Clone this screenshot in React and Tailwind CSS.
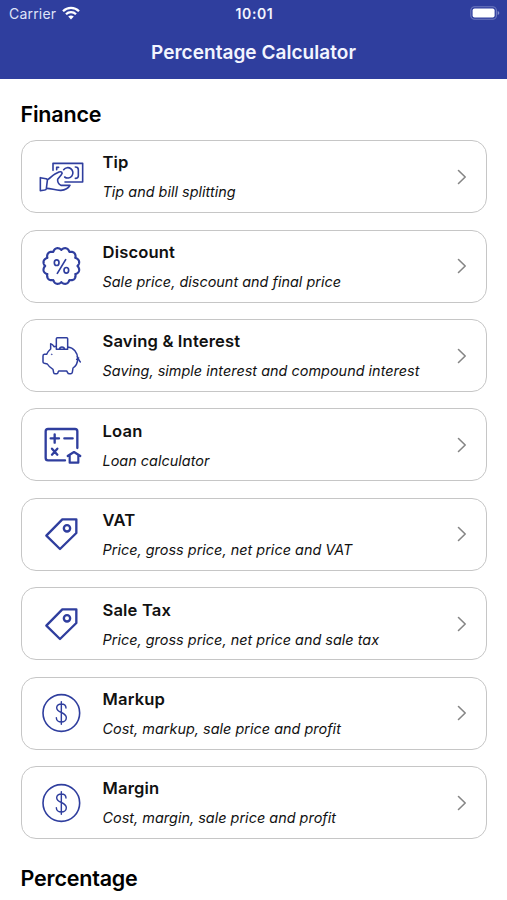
const TipIcon = () => (
  <g strokeWidth="4.8">
    <path d="M48 52V31H137V87H84" />
    <path d="M59 50V43H65M115 42C122 42 124 44 124 50V69C124 74 121 76 115 76" />
    <path d="M80 50A15.5 15.5 0 1 1 83 72" />
    <path d="M10 74L27 77Q32 78 31 83L28 107Q27 110 23 111L10 113Z" />
    <path d="M32 80C42 73 46 67 54 63L66 57C74 54 78 60 73 65L62 79C61 86 65 93 72 97L99 97C96 105 83 111 72 112C57 113 43 106 29 106" />
  </g>
);

const DiscountIcon = () => {
  const points = [];
  for (let i = 0; i < 240; i++) {
    const a = (i * Math.PI) / 120;
    const r = 48.5 + 6.5 * Math.pow(Math.abs(Math.sin(6 * a)), 0.9);
    points.push(`${(73 + r * Math.sin(a)).toFixed(1)},${(72 - r * Math.cos(a)).toFixed(1)}`);
  }
  return (
    <g strokeWidth="6.5">
      <polygon points={points.join(' ')} />
      <g strokeWidth="5">
        <ellipse cx="59" cy="62" rx="7" ry="8.5" />
        <ellipse cx="88" cy="85" rx="7" ry="8.5" />
        <path d="M86 53L61 94" />
      </g>
    </g>
  );
};

const SavingIcon = () => (
  <g strokeWidth="4.5">
    <path d="M58 52V20Q58 17 61 17H89Q92 17 92 20V52ZM67 52Q68 45 75 45T83 52" />
    <path d="M58 43L51 44C48 38 45 36 41 35V51C35 56 31 61 29 67H22Q18 68 18 72V90Q18 93 22 94L31 96C35 103 41 108 48 112L50 122Q51 125 55 125H60Q63 125 63 121L65 117H89L92 122Q93 125 97 125H101Q105 125 106 121L108 108C117 102 122 92 122 80C122 61 110 47 92 45" />
    <path d="M121 73C121 80 124 83 130 90M119 82L125 78" />
    <circle cx="44" cy="67" r="1.5" fill="currentColor" strokeWidth="1" />
  </g>
);

const LoanIcon = () => (
  <g strokeWidth="7">
    <path d="M121 81V31Q121 24 114 24H33Q26 24 26 31V111Q26 118 33 118H84" />
    <path d="M41 52H66M53 40V65M82 52H107M45 83L61 101M61 83L45 101" />
    <path strokeWidth="6.5" d="M92 105L111 93L130 105M98 103V125H124V103" />
  </g>
);

const TagIcon = () => (
  <g strokeWidth="7">
    <path d="M28 77L76 28H118V69L69 117Z" />
    <circle cx="90" cy="55" r="9.5" />
  </g>
);

const DollarIcon = () => (
  <g strokeWidth="4.8">
    <circle cx="73" cy="72" r="55" />
    <path strokeWidth="4.3" d="M73 38V106M87 57C87 41 59 41 59 56C59 72 88 69 88 86C88 103 58 103 58 86" />
  </g>
);

const calculators = [
  { title: 'Tip', text: 'Tip and bill splitting', Icon: TipIcon },
  { title: 'Discount', text: 'Sale price, discount and final price', Icon: DiscountIcon },
  { title: 'Saving & Interest', text: 'Saving, simple interest and compound interest', Icon: SavingIcon },
  { title: 'Loan', text: 'Loan calculator', Icon: LoanIcon },
  { title: 'VAT', text: 'Price, gross price, net price and VAT', Icon: TagIcon },
  { title: 'Sale Tax', text: 'Price, gross price, net price and sale tax', Icon: TagIcon },
  { title: 'Markup', text: 'Cost, markup, sale price and profit', Icon: DollarIcon },
  { title: 'Margin', text: 'Cost, margin, sale price and profit', Icon: DollarIcon },
];

const CalculatorCard = ({ title, text, Icon }) => (
  <div className="flex h-[73px] shrink-0 items-center rounded-[15px] border border-[#c6c6c6] pr-[19px] pl-[15px]">
    <svg
      viewBox="0 0 144 144"
      className="size-12 shrink-0 text-[#2f3e9e]"
      fill="none"
      stroke="currentColor"
      strokeLinecap="round"
      strokeLinejoin="round"
    >
      <Icon />
    </svg>
    <div className="ml-[18px] flex-1 pt-[1.6px] whitespace-nowrap text-[#111]">
      <h3 className="text-[16.6px] leading-5 font-semibold tracking-[0.15px]">{title}</h3>
      <p className="mt-[10px] text-[14.4px] leading-5 tracking-[0.03px] italic">{text}</p>
    </div>
    <svg
      viewBox="0 0 10 16"
      className="h-4 w-2.5 shrink-0"
      fill="none"
      stroke="#858585"
      strokeWidth="1.6"
      strokeLinecap="round"
      strokeLinejoin="round"
    >
      <path d="M1.5 1.5L8.2 8L1.5 14.5" />
    </svg>
  </div>
);

const StatusBar = () => (
  <div className="grid h-7 grid-cols-3 items-center pr-[7px] pl-[9px] text-[14px] leading-5">
    <div className="flex items-center gap-1.5 text-[#dfe3f8]">
      <span className="tracking-[0.2px]">Carrier</span>
      <svg viewBox="0 0 18 14" className="-mt-0.5 h-3.5 w-[18px]" fill="none" stroke="#fff" strokeWidth="2.3">
        <path d="M1 5.2C5.5 .8 12.5 .8 17 5.2M4 8.3C6.8 5.5 11.2 5.5 14 8.3" />
        <path d="M6.2 10.6Q9 8.2 11.8 10.6L9 13.4Z" fill="#fff" stroke="none" />
      </svg>
    </div>
    <span className="text-center font-semibold tracking-[0.6px]">10:01</span>
    <svg viewBox="0 0 30 14" className="-mt-0.5 h-3.5 w-[30px] justify-self-end">
      <rect x=".8" y=".8" width="25.6" height="12.4" rx="3.8" fill="none" stroke="#6f7abf" strokeWidth="1.1" />
      <rect x="2.6" y="2.6" width="22" height="8.8" rx="2" fill="#fff" />
      <path d="M27.7 5V9Q29.3 8.6 29.3 7T27.7 5Z" fill="#8790cc" />
    </svg>
  </div>
);

const App = () => {
  return (
    <div className="flex h-[900px] w-full flex-col overflow-hidden bg-white font-['Inter',sans-serif]">
      <header className="h-[79px] shrink-0 bg-[#2f3e9e] text-[#f3f5ff]">
        <StatusBar />
        <h1 className="mt-[12px] text-center text-[19px] leading-[26px] font-semibold tracking-[0.04px]">
          Percentage Calculator
        </h1>
      </header>
      <main className="px-[20.5px] pt-[21px] text-black">
        <h2 className="text-[21.5px] leading-7 font-semibold tracking-[-0.2px]">Finance</h2>
        <div className="mt-[12.2px] flex flex-col gap-[16.43px]">
          {calculators.map((item) => (
            <CalculatorCard key={item.title} {...item} />
          ))}
        </div>
        <h2 className="mt-[25px] text-[21.5px] leading-7 font-semibold tracking-[-0.2px]">Percentage</h2>
      </main>
    </div>
  );
};

export default App;
